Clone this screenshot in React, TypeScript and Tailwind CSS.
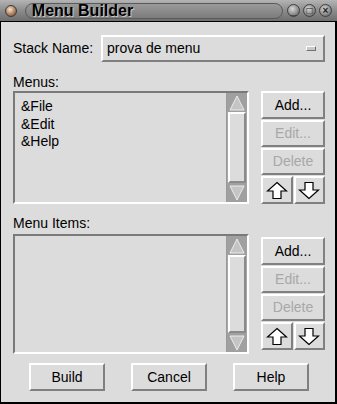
const raised =
  "border-2 border-t-white border-l-white border-b-[#808080] border-r-[#808080] bg-[#dcdcdc]";

function ArrowIcon({ down = false }: { down?: boolean }) {
  return (
    <svg width="22" height="19" viewBox="0 0 22 19" className={down ? "rotate-180" : ""}>
      <path d="M11 1.5 L20.5 10 L15 10 L15 17.5 L7 17.5 L7 10 L1.5 10 Z" fill="white" stroke="black" strokeWidth="1.2" />
    </svg>
  );
}

function Btn({ label, disabled = false, className = "" }: { label: string; disabled?: boolean; className?: string }) {
  return (
    <div
      className={`${raised} flex items-center justify-center text-[14px] ${
        disabled ? "text-[#a8a8a8]" : "text-black"
      } ${className}`}
    >
      {label}
    </div>
  );
}

function ScrollBar() {
  return (
    <div className="w-[21px] flex flex-col bg-[#a6a6a6] border-l border-[#9a9a9a]">
      <div className="h-[19px] flex items-center justify-center bg-[#a0a0a0]">
        <svg width="16" height="16" viewBox="0 0 16 16">
          <path d="M8 1 L15 15 L1 15 Z" fill="#c4c4c4" stroke="#ececec" strokeWidth="1" />
        </svg>
      </div>
      <div className="flex-1 mx-[1px] border-2 border-t-white border-l-white border-b-[#8a8a8a] border-r-[#8a8a8a] bg-[#dcdcdc]" />
      <div className="h-[19px] flex items-center justify-center bg-[#a0a0a0]">
        <svg width="16" height="16" viewBox="0 0 16 16">
          <path d="M8 15 L15 1 L1 1 Z" fill="#c4c4c4" stroke="#ececec" strokeWidth="1" />
        </svg>
      </div>
    </div>
  );
}

function ListRow({ items, tall = false }: { items: string[]; tall?: boolean }) {
  return (
    <div className="flex items-start">
      <div
        className={`w-[236px] ${tall ? "h-[120px]" : "h-[113px]"} flex border-2 border-t-[#7a7a7a] border-l-[#7a7a7a] border-b-white border-r-white`}
      >
        <div className="flex-1 pl-[6px] pt-[5px] text-[14px] leading-[17.5px] text-black">
          {items.map((it) => (
            <div key={it}>{it}</div>
          ))}
        </div>
        <ScrollBar />
      </div>
      <div className={`ml-[12px] w-[64px] flex flex-col gap-[1px] ${tall ? "mt-[3px]" : ""}`}>
        <Btn label="Add..." className="h-[28px]" />
        <Btn label="Edit..." disabled className="h-[27px]" />
        <Btn label="Delete" disabled className="h-[27px]" />
        <div className="flex gap-[1px] h-[28px]">
          <div className={`${raised} flex-1 flex items-center justify-center`}>
            <ArrowIcon />
          </div>
          <div className={`${raised} flex-1 flex items-center justify-center`}>
            <ArrowIcon down />
          </div>
        </div>
      </div>
    </div>
  );
}

function TitleBar() {
  return (
    <div className="h-[22px] flex items-center border-b border-black bg-gradient-to-b from-[#b4b4b4] via-[#8c8c8c] to-[#6e6e6e] px-[5px]">
      <div className="w-[12px] h-[12px] rounded-full bg-[radial-gradient(circle_at_40%_35%,#f4e4d0,#b08060_55%,#5a4030)] border border-[#3a3a3a]" />
      <div className="ml-[8px] w-[262px] h-[16px] rounded-full border border-[#5a5a5a] bg-gradient-to-b from-[#9a9a9a] to-[#7c7c7c] flex items-center pl-[6px]">
        <span className="text-[16px] font-bold leading-none text-black [text-shadow:1px_1px_0_#c8c8c8]">Menu Builder</span>
      </div>
      <div className="ml-[4px] flex gap-[3px]">
        {["_", "□", "×"].map((g) => (
          <div
            key={g}
            className="w-[13px] h-[13px] rounded-full bg-[radial-gradient(circle_at_40%_35%,#d8d8d8,#8a8a8a_60%,#505050)] border border-[#404040] flex items-center justify-center text-[10px] font-bold leading-none text-[#202020]"
          >
            {g}
          </div>
        ))}
      </div>
    </div>
  );
}

export default function App() {
  return (
    <div className="w-[337px] h-[404px] bg-black font-['Liberation_Sans',Arial,sans-serif] flex flex-col">
      <TitleBar />
      <div className="flex-1 ml-[1px] mr-[2px] mb-[2px] bg-[#dcdcdc] pl-[12px] pr-[10px] pt-[13px] flex flex-col">
        <div className="flex items-center">
          <span className="text-[14px] text-black w-[88px]">Stack Name:</span>
          <div className={`${raised} flex-1 h-[27px] flex items-center pl-[4px] pr-[7px] text-[14px] text-black`}>
            <span className="flex-1">prova de menu</span>
            <div className="w-[10px] h-[5px] border border-t-white border-l-white border-b-[#707070] border-r-[#707070] bg-[#c8c8c8]" />
          </div>
        </div>
        <div className="mt-[12px] text-[14px] leading-[17px] text-black">Menus:</div>
        <div>
          <ListRow items={["&File", "&Edit", "&Help"]} />
        </div>
        <div className="mt-[11px] text-[14px] leading-[17px] text-black">Menu Items:</div>
        <div className="mt-[2px]">
          <ListRow items={[]} tall />
        </div>
        <div className="mt-[9px] flex pl-[16px] gap-[26px]">
          <Btn label="Build" className="w-[76px] h-[28px]" />
          <Btn label="Cancel" className="w-[76px] h-[28px]" />
          <Btn label="Help" className="w-[76px] h-[28px]" />
        </div>
      </div>
    </div>
  );
}
